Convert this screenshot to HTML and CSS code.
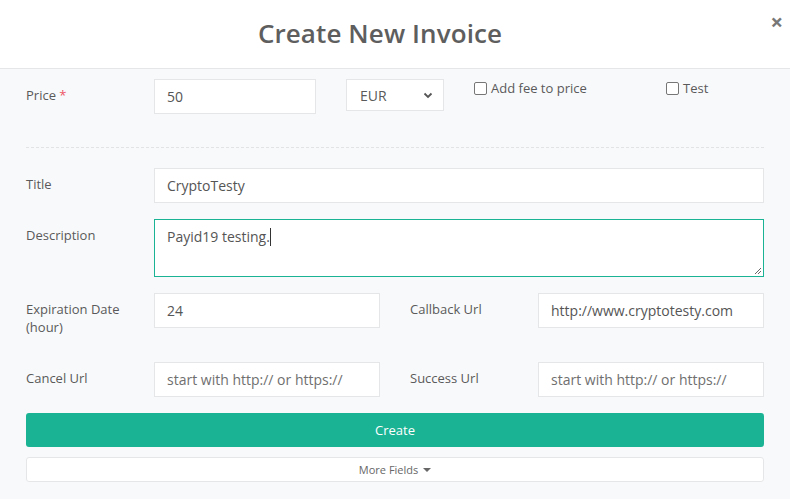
FILE: index.html
```html
<!DOCTYPE html>
<html lang="en">

<head>
    <meta charset="utf-8" />
    <title>Create New Invoice</title>
    <link rel="stylesheet" href="styles.css">
</head>

<body>
    <div class="modal">
        <div class="modal-header">
            <h2>Create New Invoice</h2>
            <span class="close">&times;</span>
        </div>
        <div class="modal-body">
            <div class="row price-row">
                <label class="lbl">Price <span class="req">*</span></label>
                <input class="field price" type="text" value="50">
                <div class="select">EUR
                    <svg width="10" height="7" viewBox="0 0 10 7"><path d="M1.5 1.5 L5 5 L8.5 1.5" fill="none" stroke="#555" stroke-width="1.8"/></svg>
                </div>
                <label class="check fee"><span class="box"></span>Add fee to price</label>
                <label class="check"><span class="box"></span>Test</label>
            </div>
            <div class="divider"></div>
            <div class="row">
                <label class="lbl">Title</label>
                <input class="field wide" type="text" value="CryptoTesty">
            </div>
            <div class="row">
                <label class="lbl">Description</label>
                <div class="field wide area">Payid19 testing.<span class="caret"></span>
                    <svg class="grip" width="8" height="8" viewBox="0 0 8 8"><path d="M7 1 L1 7 M7 4 L4 7" stroke="#666" stroke-width="1"/></svg>
                </div>
            </div>
            <div class="row">
                <label class="lbl">Expiration Date (hour)</label>
                <input class="field half" type="text" value="24">
                <label class="lbl second">Callback Url</label>
                <input class="field half" type="text" value="http://www.cryptotesty.com">
            </div>
            <div class="row">
                <label class="lbl">Cancel Url</label>
                <input class="field half" type="text" placeholder="start with http:// or https://">
                <label class="lbl second">Success Url</label>
                <input class="field half" type="text" placeholder="start with http:// or https://">
            </div>
            <button class="btn-create">Create</button>
            <button class="btn-more">More Fields <span class="tri"></span></button>
        </div>
    </div>
</body>

</html>
```

FILE: styles.css
```css
body {
    margin: 0;
    font-family: "Open Sans", "Noto Sans", sans-serif;
    color: #5a5a5a;
    background: #f8f9fb;
}

.modal {
    width: 790px;
    height: 499px;
    overflow: hidden;
}

.modal-header {
    position: relative;
    box-sizing: border-box;
    background: #fff;
    height: 69px;
    padding: 0 30px 2px 0;
    border-bottom: 1px solid #e5e6e7;
    display: flex;
    align-items: center;
    justify-content: center;
}

.modal-header h2 {
    margin: 0;
    font-size: 26px;
    font-weight: 600;
    color: #5e5e5e;
    letter-spacing: 0.1px;
}

.close {
    position: absolute;
    right: 7px;
    top: 6px;
    font-size: 22px;
    font-weight: 700;
    color: #777;
}

.modal-body {
    padding: 10px 26px 0;
}

.row {
    display: flex;
    align-items: flex-start;
    margin-bottom: 16px;
}

.lbl {
    width: 128px;
    flex: none;
    font-size: 13px;
    line-height: 18px;
    padding: 7px 0 10px;
    color: #5a5a5a;
}

.lbl.second {
    margin-left: 30px;
}

.req {
    color: #ed5565;
}

.field {
    box-sizing: border-box;
    height: 35px;
    border: 1px solid #e5e6e7;
    background: #fff;
    font-family: inherit;
    font-size: 14px;
    color: #555;
    padding: 0 12px;
    outline: none;
}

.field::placeholder {
    color: #6f6f6f;
}

.price {
    width: 162px;
}

.wide {
    flex: 1;
}

.half {
    width: 226px;
}

.area {
    position: relative;
    height: 58px;
    border-color: #1ab394;
    padding-top: 7px;
    line-height: 20px;
}

.caret {
    display: inline-block;
    width: 1px;
    height: 18px;
    background: #333;
    vertical-align: -4px;
}

.grip {
    position: absolute;
    right: 1px;
    bottom: 1px;
}

.select {
    box-sizing: border-box;
    width: 98px;
    height: 32px;
    margin-left: 30px;
    border: 1px solid #e5e6e7;
    background: #fff;
    font-size: 14px;
    padding: 1px 10px 0 13px;
    display: flex;
    align-items: center;
    justify-content: space-between;
}

.check {
    display: flex;
    align-items: center;
    font-size: 13px;
    line-height: 18px;
}

.check.fee {
    margin-left: 30px;
    width: 192px;
}

.box {
    box-sizing: border-box;
    width: 13px;
    height: 13px;
    border: 1px solid #767676;
    border-radius: 2px;
    background: #fff;
    margin-right: 4px;
}

.price-row {
    margin-bottom: 0;
    height: 56px;
}

.divider {
    border-top: 1px dashed #e2e3e5;
    margin: 12px 0 20px;
}

.btn-create {
    display: block;
    width: 100%;
    height: 34px;
    border: none;
    border-radius: 3px;
    background: #1ab394;
    color: #fff;
    font-family: inherit;
    font-size: 13px;
}

.btn-more {
    display: block;
    width: 100%;
    height: 25px;
    margin-top: 10px;
    border: 1px solid #e5e6e7;
    border-radius: 3px;
    background: #fff;
    color: #676767;
    font-family: inherit;
    font-size: 11px;
}

.tri {
    display: inline-block;
    border-left: 4px solid transparent;
    border-right: 4px solid transparent;
    border-top: 4px solid #676767;
    vertical-align: 2px;
    margin-left: 2px;
}
```
